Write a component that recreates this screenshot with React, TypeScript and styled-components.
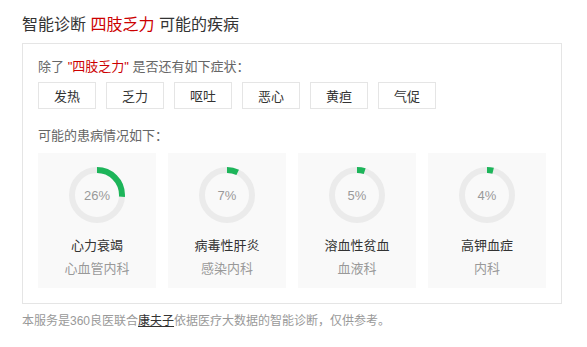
import styled, { createGlobalStyle } from "styled-components";

const GlobalStyle = createGlobalStyle`
  html, body {
    margin: 0;
    padding: 0;
    background: #fff;
  }
  body {
    font-family: "Liberation Sans", "Noto Sans CJK SC", sans-serif;
    color: #333;
  }
`;

const Page = styled.div`
  width: 540px;
  padding: 12px 22px;
`;

const Title = styled.h2`
  margin: 0 0 5px 0;
  font-size: 16px;
  font-weight: normal;
  line-height: 26px;
  color: #333;

  em {
    font-style: normal;
    color: #c00;
  }
`;

const Box = styled.section`
  border: 1px solid #e5e5e5;
  padding: 13px 15px 15px 15px;
`;

const Label = styled.p`
  margin: 0;
  font-size: 13px;
  line-height: 20px;
  color: #666;

  em {
    font-style: normal;
    color: #c00;
  }
`;

const Symptoms = styled.div`
  display: flex;
  gap: 10px;
  margin: 5px 0 17px 0;
`;

const SymptomButton = styled.button`
  box-sizing: border-box;
  width: 58px;
  height: 27px;
  padding: 0;
  border: 1px solid #e5e5e5;
  background: #fff;
  font-family: inherit;
  font-size: 13px;
  color: #333;
  cursor: pointer;
`;

const Cards = styled.div`
  display: grid;
  grid-template-columns: repeat(4, 118px);
  gap: 12px;
  margin-top: 7px;
`;

const Card = styled.div`
  display: flex;
  flex-direction: column;
  align-items: center;
  height: 135px;
  padding-top: 14px;
  box-sizing: border-box;
  background: #f9f9f9;
`;

const Ring = styled.div`
  position: relative;
  width: 56px;
  height: 56px;

  svg {
    display: block;
  }
`;

const Percent = styled.span`
  position: absolute;
  inset: 0;
  display: flex;
  align-items: center;
  justify-content: center;
  font-size: 13px;
  color: #999;
`;

const Name = styled.div`
  margin-top: 13px;
  font-size: 13px;
  line-height: 20px;
  color: #333;
`;

const Dept = styled.div`
  margin-top: 3px;
  font-size: 13px;
  line-height: 20px;
  color: #999;
`;

const Footer = styled.p`
  margin: 7px 0 0 0;
  font-size: 12px;
  line-height: 20px;
  color: #999;

  a {
    color: #333;
    text-decoration: underline;
  }
`;

const symptoms = ["发热", "乏力", "呕吐", "恶心", "黄疸", "气促"];

const diseases = [
  { name: "心力衰竭", dept: "心血管内科", pct: 26 },
  { name: "病毒性肝炎", dept: "感染内科", pct: 7 },
  { name: "溶血性贫血", dept: "血液科", pct: 5 },
  { name: "高钾血症", dept: "内科", pct: 4 },
];

function Progress({ pct }: { pct: number }) {
  const r = 25;
  const c = 2 * Math.PI * r;
  return (
    <Ring>
      <svg width="56" height="56" viewBox="0 0 56 56">
        <circle cx="28" cy="28" r={r} fill="none" stroke="#ebebeb" strokeWidth="6" />
        <circle
          cx="28"
          cy="28"
          r={r}
          fill="none"
          stroke="#1db55a"
          strokeWidth="6"
          strokeDasharray={`${(c * pct) / 100} ${c}`}
          transform="rotate(-90 28 28)"
        />
      </svg>
      <Percent>{pct}%</Percent>
    </Ring>
  );
}

export default function App(): JSX.Element {
  return (
    <>
      <GlobalStyle />
      <Page>
        <Title>
          智能诊断 <em>四肢乏力</em> 可能的疾病
        </Title>
        <Box>
          <Label>
            除了 <em>"四肢乏力"</em> 是否还有如下症状：
          </Label>
          <Symptoms>
            {symptoms.map((s) => (
              <SymptomButton key={s}>{s}</SymptomButton>
            ))}
          </Symptoms>
          <Label>可能的患病情况如下：</Label>
          <Cards>
            {diseases.map((d) => (
              <Card key={d.name}>
                <Progress pct={d.pct} />
                <Name>{d.name}</Name>
                <Dept>{d.dept}</Dept>
              </Card>
            ))}
          </Cards>
        </Box>
        <Footer>
          本服务是360良医联合<a>康夫子</a>依据医疗大数据的智能诊断，仅供参考。
        </Footer>
      </Page>
    </>
  );
}
